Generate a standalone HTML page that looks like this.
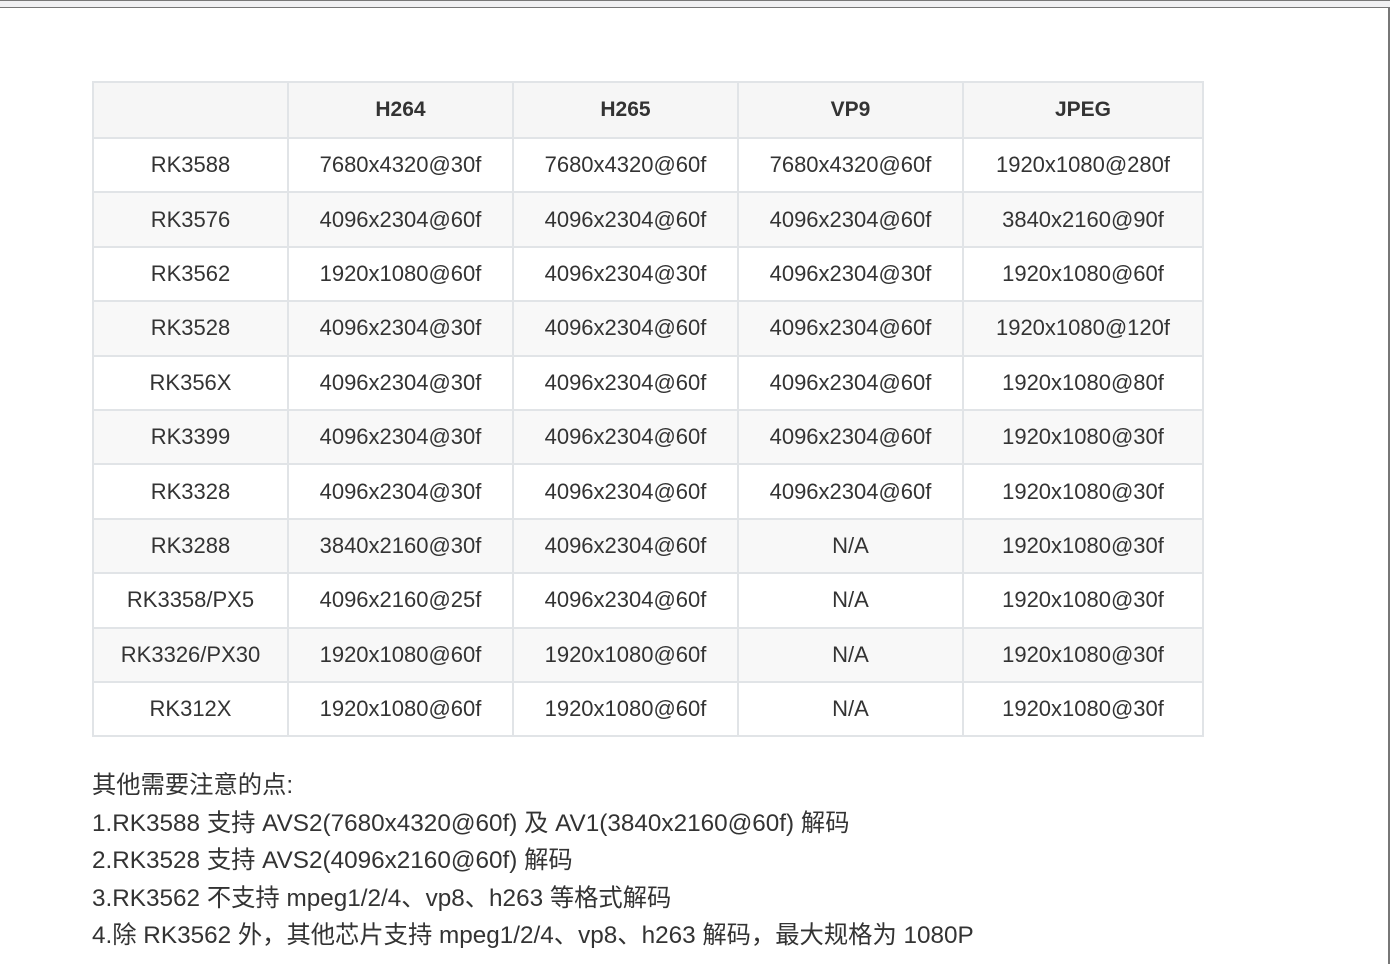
<!DOCTYPE html>
<html><head><meta charset="utf-8"><style>
html,body{margin:0;padding:0;background:#fff;width:1390px;height:964px;overflow:hidden;position:relative;font-family:"Liberation Sans","Noto Sans CJK SC",sans-serif;color:#333}
.topbar{position:absolute;left:0;top:0;width:1390px;height:8px;background:#f0f0f2;border-top:1px solid #777;border-bottom:1px solid #777;box-sizing:border-box}
.rline{position:absolute;left:1388px;top:8px;width:2px;height:956px;background:#777}
table{position:absolute;left:92px;top:81px;border-collapse:collapse;font-size:22px}
td,th{border:2px solid #e1e4e7;text-align:center;padding:0;height:52.4px}
th{height:54px;background:#f6f6f6;font-weight:bold;font-size:21px}
tbody tr:nth-child(odd) td{background:#fff}
tbody tr:nth-child(even) td{background:#f8f8f8}
.notes{position:absolute;left:92px;top:767px;font-size:24.3px;line-height:37.6px;color:#333}
</style></head><body>
<div class="topbar"></div><div class="rline"></div>
<table>
<colgroup><col style="width:195px"><col style="width:225px"><col style="width:225px"><col style="width:225px"><col style="width:240px"></colgroup>
<thead><tr><th></th><th>H264</th><th>H265</th><th>VP9</th><th>JPEG</th></tr></thead>
<tbody>
<tr><td>RK3588</td><td>7680x4320@30f</td><td>7680x4320@60f</td><td>7680x4320@60f</td><td>1920x1080@280f</td></tr>
<tr><td>RK3576</td><td>4096x2304@60f</td><td>4096x2304@60f</td><td>4096x2304@60f</td><td>3840x2160@90f</td></tr>
<tr><td>RK3562</td><td>1920x1080@60f</td><td>4096x2304@30f</td><td>4096x2304@30f</td><td>1920x1080@60f</td></tr>
<tr><td>RK3528</td><td>4096x2304@30f</td><td>4096x2304@60f</td><td>4096x2304@60f</td><td>1920x1080@120f</td></tr>
<tr><td>RK356X</td><td>4096x2304@30f</td><td>4096x2304@60f</td><td>4096x2304@60f</td><td>1920x1080@80f</td></tr>
<tr><td>RK3399</td><td>4096x2304@30f</td><td>4096x2304@60f</td><td>4096x2304@60f</td><td>1920x1080@30f</td></tr>
<tr><td>RK3328</td><td>4096x2304@30f</td><td>4096x2304@60f</td><td>4096x2304@60f</td><td>1920x1080@30f</td></tr>
<tr><td>RK3288</td><td>3840x2160@30f</td><td>4096x2304@60f</td><td>N/A</td><td>1920x1080@30f</td></tr>
<tr><td>RK3358/PX5</td><td>4096x2160@25f</td><td>4096x2304@60f</td><td>N/A</td><td>1920x1080@30f</td></tr>
<tr><td>RK3326/PX30</td><td>1920x1080@60f</td><td>1920x1080@60f</td><td>N/A</td><td>1920x1080@30f</td></tr>
<tr><td>RK312X</td><td>1920x1080@60f</td><td>1920x1080@60f</td><td>N/A</td><td>1920x1080@30f</td></tr>
</tbody></table>
<div class="notes">其他需要注意的点:<br>1.RK3588 支持 AVS2(7680x4320@60f) 及 AV1(3840x2160@60f) 解码<br>2.RK3528 支持 AVS2(4096x2160@60f) 解码<br>3.RK3562 不支持 mpeg1/2/4、vp8、h263 等格式解码<br>4.除 RK3562 外，其他芯片支持 mpeg1/2/4、vp8、h263 解码，最大规格为 1080P</div>
</body></html>
